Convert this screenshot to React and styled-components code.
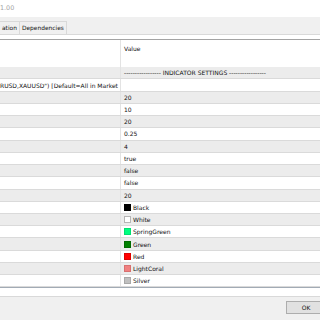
import React from "react";
import styled, { createGlobalStyle } from "styled-components";

const GlobalStyle = createGlobalStyle`
  html, body {
    margin: 0;
    padding: 0;
    background: #ffffff;
    overflow: hidden;
  }
  body {
    font-family: "DejaVu Sans", "Liberation Sans", sans-serif;
    color: #111111;
  }
`;

const Dialog = styled.div`
  width: 320px;
  height: 320px;
  display: flex;
  flex-direction: column;
  overflow: hidden;
  background: #f0f0f0;
`;

const TitleBar = styled.div`
  height: 17px;
  background: #ffffff;
  color: #a3a3a3;
  font-size: 6.4px;
  line-height: 16px;
  white-space: nowrap;
`;

const TabStrip = styled.div`
  height: 18px;
  box-sizing: border-box;
  display: flex;
  align-items: flex-end;
  background: #f0f0f0;
`;

const Tab = styled.div`
  height: 13px;
  box-sizing: border-box;
  border: 1px solid #d9d9d9;
  border-bottom: none;
  border-left-width: ${(p) => (p.$first ? "0" : "1px")};
  margin-left: ${(p) => (p.$first ? "0" : "-1px")};
  padding: 0 2px;
  font-size: 5.9px;
  line-height: 12px;
  background: #f0f0f0;
  white-space: nowrap;
`;

const Panel = styled.div`
  flex: 1;
  background: #ffffff;
  border-top: 1px solid #d9d9d9;
  border-bottom: 1px solid #d9d9d9;
  padding: 4px 0 8px;
  display: flex;
  flex-direction: column;
`;

const List = styled.div`
  border-top: 1px solid #a3a3a3;
  border-bottom: 1px solid #a2abb5;
  display: flex;
  flex-direction: column;
`;

const Row = styled.div`
  display: grid;
  grid-template-columns: 121px 1fr;
  height: ${(p) => (p.$header ? "27px" : "12.24px")};
  box-sizing: border-box;
  background: ${(p) => (p.$shaded ? "#ececec" : "#ffffff")};
  border-bottom: ${(p) => (p.$header ? "none" : "1px solid #dadada")};
  font-size: 6px;
`;

const NameCell = styled.div`
  border-right: 1px solid #e3e3e3;
  overflow: hidden;
  white-space: nowrap;
  display: flex;
  align-items: ${(p) => (p.$header ? "flex-start" : "center")};
`;

const ValueCell = styled.div`
  overflow: hidden;
  white-space: nowrap;
  padding-left: 3px;
  padding-top: ${(p) => (p.$header ? "5px" : "0")};
  display: flex;
  align-items: ${(p) => (p.$header ? "flex-start" : "center")};
  gap: 2px;
`;

const Swatch = styled.span`
  width: 7px;
  height: 7px;
  box-sizing: border-box;
  background: ${(p) => p.$color};
  border: 1px solid ${(p) => p.$edge};
  flex: none;
`;

const Footer = styled.div`
  height: 23px;
  box-sizing: border-box;
  padding-top: 4px;
  display: flex;
  justify-content: flex-end;
  background: #f0f0f0;
`;

const Button = styled.div`
  width: 40px;
  height: 13px;
  margin-right: -6px;
  box-sizing: border-box;
  background: #e1e1e1;
  border: 1px solid #adadad;
  font-size: 6px;
  line-height: 11px;
  text-align: center;
`;

const rows = [
  { name: "", value: "----------------- INDICATOR SETTINGS -----------------" },
  { name: "RUSD,XAUUSD\") [Default=All in Market", value: "" },
  { name: "", value: "20" },
  { name: "", value: "10" },
  { name: "", value: "20" },
  { name: "", value: "0.25" },
  { name: "", value: "4" },
  { name: "", value: "true" },
  { name: "", value: "false" },
  { name: "", value: "false" },
  { name: "", value: "20" },
  { name: "", value: "Black", color: "#000000", edge: "#000000" },
  { name: "", value: "White", color: "#ffffff", edge: "#b5b5b5" },
  { name: "", value: "SpringGreen", color: "#00ff7f", edge: "#00e070" },
  { name: "", value: "Green", color: "#008000", edge: "#006a00" },
  { name: "", value: "Red", color: "#ff0000", edge: "#dd0000" },
  { name: "", value: "LightCoral", color: "#f08080", edge: "#d87070" },
  { name: "", value: "Silver", color: "#c0c0c0", edge: "#a8a8a8" },
];

export default function App() {
  return (
    <>
      <GlobalStyle />
      <Dialog>
        <TitleBar>1.00</TitleBar>
        <TabStrip>
          <Tab $first>ation</Tab>
          <Tab>Dependencies</Tab>
        </TabStrip>
        <Panel>
          <List>
            <Row $header>
              <NameCell $header />
              <ValueCell $header>Value</ValueCell>
            </Row>
            {rows.map((r, i) => (
              <Row key={i} $shaded={i % 2 === 0}>
                <NameCell>{r.name}</NameCell>
                <ValueCell>
                  {r.color && <Swatch $color={r.color} $edge={r.edge} />}
                  {r.value}
                </ValueCell>
              </Row>
            ))}
          </List>
        </Panel>
        <Footer>
          <Button>OK</Button>
        </Footer>
      </Dialog>
    </>
  );
}
